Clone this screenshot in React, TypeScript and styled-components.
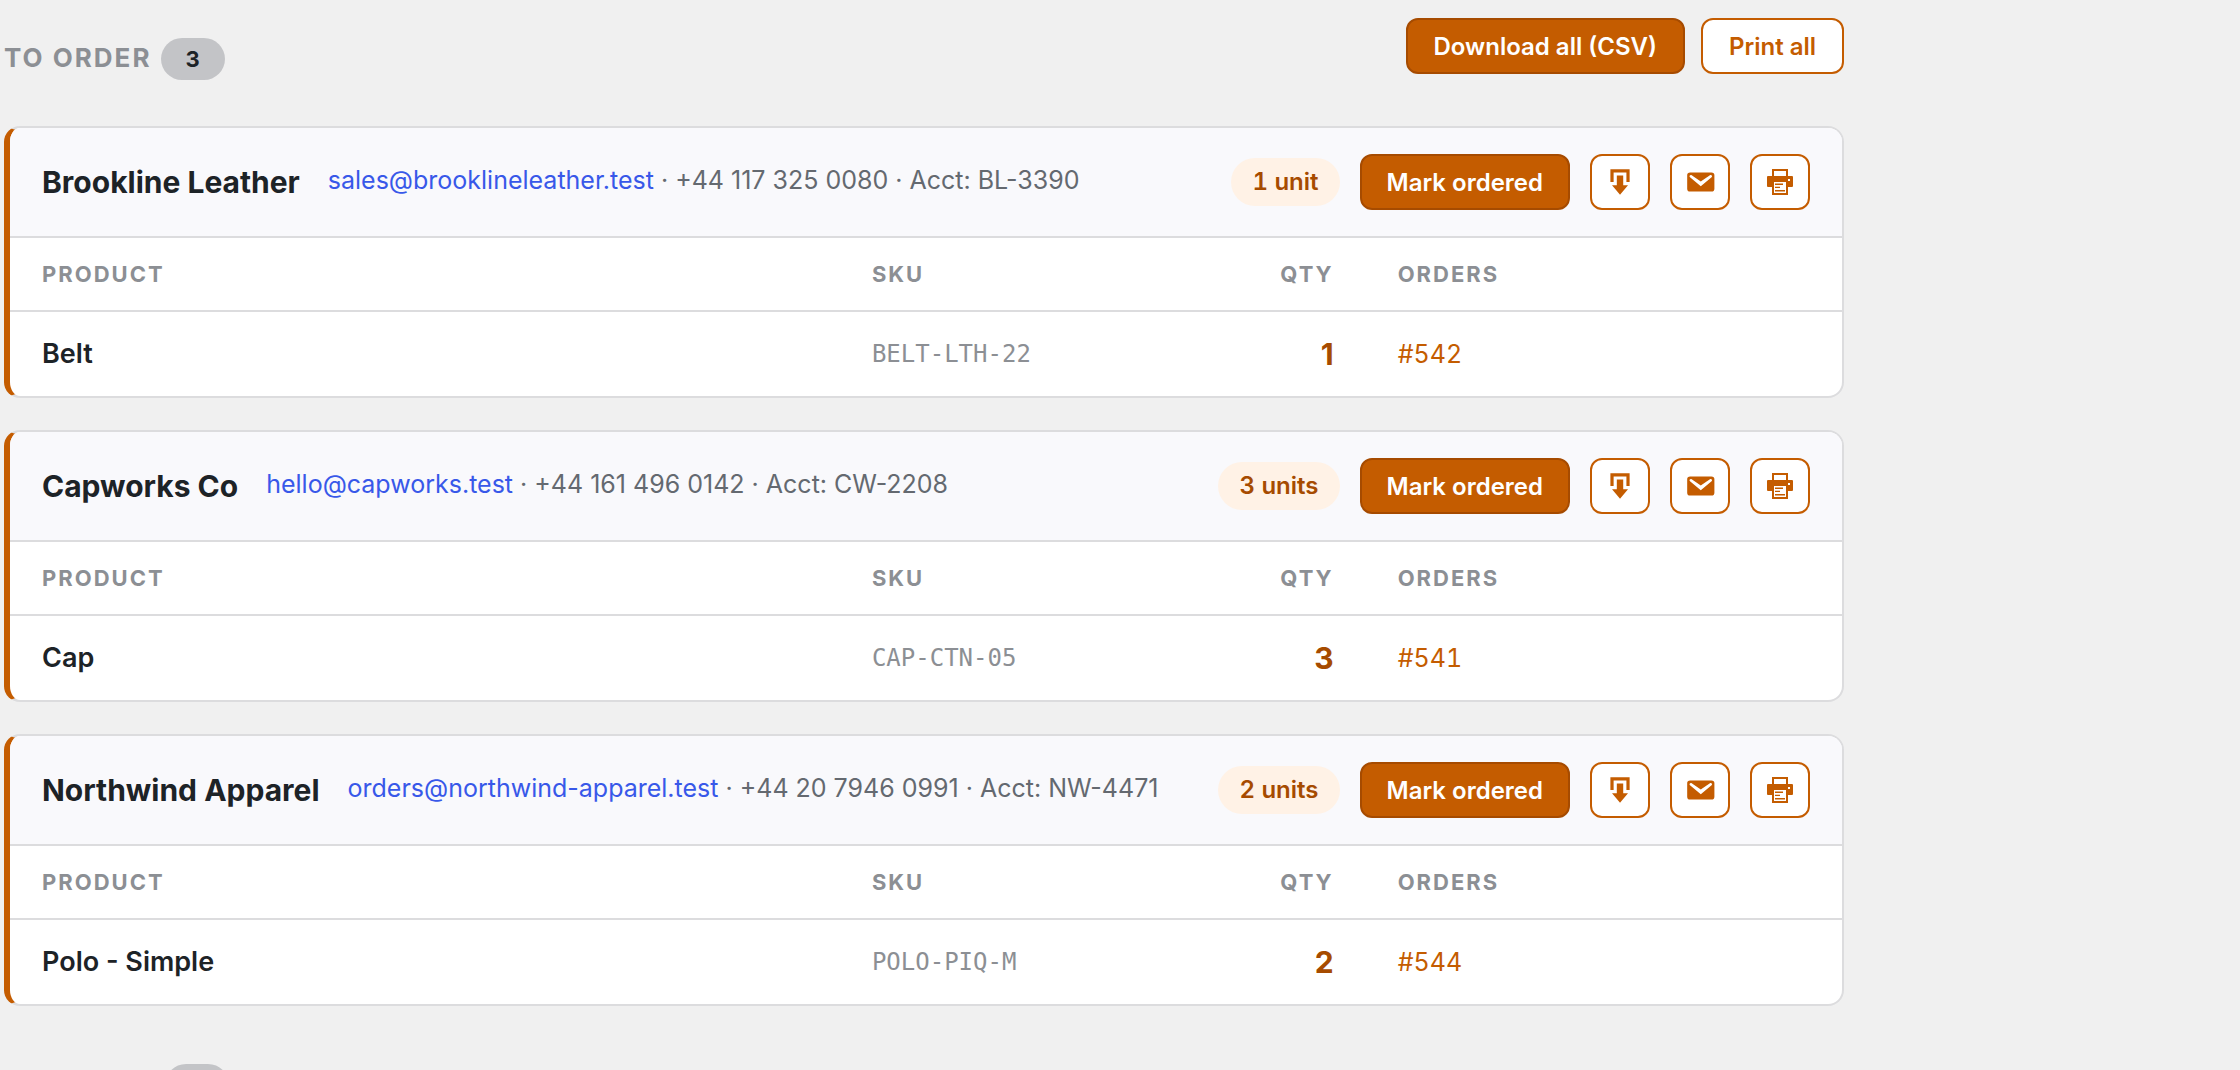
import React from 'react';
import styled, { createGlobalStyle, css } from 'styled-components';

const GlobalStyle = createGlobalStyle`
  *, *::before, *::after { box-sizing: border-box; }
  body {
    margin: 0;
    background: #f0f0f0;
    color: #1d2327;
    font-family: Inter, "Liberation Sans", sans-serif;
    font-size: 26px;
    line-height: 40px;
  }
`;

const Page = styled.main`
  display: flex;
  flex-direction: column;
  gap: 38px;
  height: 100vh;
  overflow: hidden;
  padding: 18px 396px 0 4px;
`;

const Section = styled.section`
  flex-shrink: 0;
`;

const SectionHead = styled.header`
  display: flex;
  align-items: flex-start;
  justify-content: space-between;
  margin-bottom: 46px;
`;

const SectionTitle = styled.h2`
  display: flex;
  align-items: baseline;
  gap: 10px;
  margin: 20px 0 0;
  color: #8c8f94;
  font-size: 26px;
  font-weight: 700;
  line-height: 36px;
  letter-spacing: 2px;
  text-transform: uppercase;
`;

const Count = styled.span`
  min-width: 64px;
  padding: 0 20px;
  border-radius: 21px;
  background: #c3c4c7;
  color: #1d2327;
  font-size: 22px;
  line-height: 42px;
  text-align: center;
`;

const Actions = styled.div`
  display: flex;
  align-items: center;
  gap: 16px;
`;

const Button = styled.button<{ $primary?: boolean; $icon?: boolean }>`
  display: inline-flex;
  align-items: center;
  justify-content: center;
  height: 56px;
  padding: 0 25px;
  border: 2px solid #c45c00;
  border-radius: 12px;
  background: #fff;
  color: #c45c00;
  font-family: inherit;
  font-size: 24px;
  font-weight: 600;
  white-space: nowrap;
  cursor: pointer;
  ${(p) => p.$primary && css`
    border-color: #a64b00;
    background: #c45c00;
    color: #fff;
  `}
  ${(p) => p.$icon && css`
    width: 60px;
    padding: 0;
  `}
`;

const ToolbarButton = styled(Button)`
  padding: 0 26px;
`;

const CardList = styled.div`
  display: flex;
  flex-direction: column;
  gap: 32px;
`;

const Card = styled.article`
  border: 2px solid #dcdcde;
  border-left: 6px solid #c45c00;
  border-radius: 16px;
  background: #fff;
  overflow: hidden;
`;

const CardHead = styled.header`
  display: flex;
  align-items: center;
  justify-content: space-between;
  height: 110px;
  padding: 0 32px;
  border-bottom: 2px solid #dcdcde;
  background: #f9f9fc;
`;

const Supplier = styled.div`
  display: flex;
  align-items: flex-start;
  gap: 28px;
`;

const Name = styled.h3`
  margin: 0;
  font-size: 30px;
  font-weight: 700;
  line-height: 40px;
`;

const Contact = styled.p`
  margin: 0;
  color: #646970;
  font-size: 25px;
  line-height: 36px;
`;

const Email = styled.a`
  color: #3858e9;
  text-decoration: none;
`;

const CardActions = styled.div`
  display: flex;
  align-items: center;
  gap: 20px;
`;

const Units = styled.span`
  padding: 0 21px;
  border-radius: 24px;
  background: #fff2e6;
  color: #a64b00;
  font-size: 24px;
  font-variant-numeric: tabular-nums;
  font-weight: 600;
  line-height: 48px;
`;

const Table = styled.table`
  width: 100%;
  border-collapse: separate;
  border-spacing: 0;
  table-layout: fixed;
  text-align: left;
`;

const Col = styled.col<{ $width: string }>`
  width: ${(p) => p.$width};
`;

const HeadCell = styled.th<{ $right?: boolean }>`
  height: 74px;
  padding: 0 32px;
  border-bottom: 2px solid #dcdcde;
  color: #8c8f94;
  font-size: 22px;
  font-weight: 700;
  letter-spacing: 2px;
  text-transform: uppercase;
  text-align: ${(p) => (p.$right ? 'right' : 'left')};
`;

const Cell = styled.td`
  height: 84px;
  padding: 0 32px;
`;

const Product = styled(Cell)`
  font-size: 27px;
  font-weight: 600;
`;

const Sku = styled(Cell)`
  color: #8c8f94;
  font-family: "DejaVu Sans Mono", monospace;
  font-size: 24px;
`;

const Quantity = styled(Cell)`
  color: #a64b00;
  font-size: 30px;
  font-weight: 700;
  text-align: right;
`;

const OrderLink = styled.a`
  color: #c45c00;
  font-size: 25px;
  font-variant-numeric: tabular-nums;
  text-decoration: none;
`;

const Icon = styled.svg`
  width: 32px;
  height: 32px;
  fill: currentColor;
`;

const DownloadIcon = () => (
  <Icon viewBox="0 0 20 20" aria-hidden="true">
    <path d="M14.01 4v6h2V2H4v8h2.01V4h8zm-2 2v6h3l-5 6-5-6h3V6h4z" />
  </Icon>
);

const EmailIcon = () => (
  <Icon viewBox="0 0 20 20" aria-hidden="true">
    <path d="M3.87 4h13.25C18.37 4 19 4.59 19 5.79v8.42c0 1.19-.63 1.79-1.88 1.79H3.87c-1.25 0-1.88-.6-1.88-1.79V5.79c0-1.2.63-1.79 1.88-1.79zm6.62 8.6l6.74-5.53c.24-.2.43-.66.13-1.07-.29-.41-.82-.42-1.17-.17l-5.7 3.86L4.8 5.83c-.35-.25-.88-.24-1.17.17-.3.41-.11.87.13 1.07z" />
  </Icon>
);

const PrintIcon = () => (
  <Icon viewBox="0 0 32 32" aria-hidden="true">
    <path
      fillRule="evenodd"
      d="M8 3h16v7h4q1 0 1 1v9q0 1-1 1h-4v8H8v-8H4q-1 0-1-1v-9q0-1 1-1h4zM10 5v5h12V5zM10 16v11h12V16zM24 13h2v2h-2z"
    />
    <path d="M11 17.500h8v1.400h-8zM11 20.700h5v1.400h-5zM11 24h10v1.400h-10z" />
  </Icon>
);

interface Order {
  name: string;
  email: string;
  phone: string;
  account: string;
  product: string;
  sku: string;
  quantity: number;
  order: string;
}

const suppliers: Order[] = [
  { name: 'Brookline Leather', email: 'sales@brooklineleather.test', phone: '+44 117 325 0080', account: 'BL-3390', product: 'Belt', sku: 'BELT-LTH-22', quantity: 1, order: '542' },
  { name: 'Capworks Co', email: 'hello@capworks.test', phone: '+44 161 496 0142', account: 'CW-2208', product: 'Cap', sku: 'CAP-CTN-05', quantity: 3, order: '541' },
  { name: 'Northwind Apparel', email: 'orders@northwind-apparel.test', phone: '+44 20 7946 0991', account: 'NW-4471', product: 'Polo - Simple', sku: 'POLO-PIQ-M', quantity: 2, order: '544' },
];

const SupplierCard = ({ item }: { item: Order }) => (
  <Card>
    <CardHead>
      <Supplier>
        <Name>{item.name}</Name>
        <Contact>
          <Email href={`mailto:${item.email}`}>{item.email}</Email> · {item.phone} · Acct: {item.account}
        </Contact>
      </Supplier>
      <CardActions>
        <Units>{item.quantity} {item.quantity === 1 ? 'unit' : 'units'}</Units>
        <Button type="button" $primary>Mark ordered</Button>
        <Button type="button" $icon aria-label="Download"><DownloadIcon /></Button>
        <Button type="button" $icon aria-label="Email"><EmailIcon /></Button>
        <Button type="button" $icon aria-label="Print"><PrintIcon /></Button>
      </CardActions>
    </CardHead>
    <Table>
      <colgroup>
        <Col $width="45.3%" />
        <Col $width="16.4%" />
        <Col $width="12.3%" />
        <Col $width="26%" />
      </colgroup>
      <thead>
        <tr>
          <HeadCell scope="col">Product</HeadCell>
          <HeadCell scope="col">SKU</HeadCell>
          <HeadCell scope="col" $right>Qty</HeadCell>
          <HeadCell scope="col">Orders</HeadCell>
        </tr>
      </thead>
      <tbody>
        <tr>
          <Product>{item.product}</Product>
          <Sku>{item.sku}</Sku>
          <Quantity>{item.quantity}</Quantity>
          <Cell><OrderLink href={`#${item.order}`}>#{item.order}</OrderLink></Cell>
        </tr>
      </tbody>
    </Table>
  </Card>
);

export default function App() {
  return (
    <>
      <GlobalStyle />
      <Page>
        <Section>
          <SectionHead>
            <SectionTitle>To order <Count>3</Count></SectionTitle>
            <Actions>
              <ToolbarButton type="button" $primary>Download all (CSV)</ToolbarButton>
              <ToolbarButton type="button">Print all</ToolbarButton>
            </Actions>
          </SectionHead>
          <CardList>
            {suppliers.map((item) => <SupplierCard key={item.sku} item={item} />)}
          </CardList>
        </Section>
        <Section>
          <SectionHead>
            <SectionTitle>On order <Count>1</Count></SectionTitle>
          </SectionHead>
        </Section>
      </Page>
    </>
  );
}
